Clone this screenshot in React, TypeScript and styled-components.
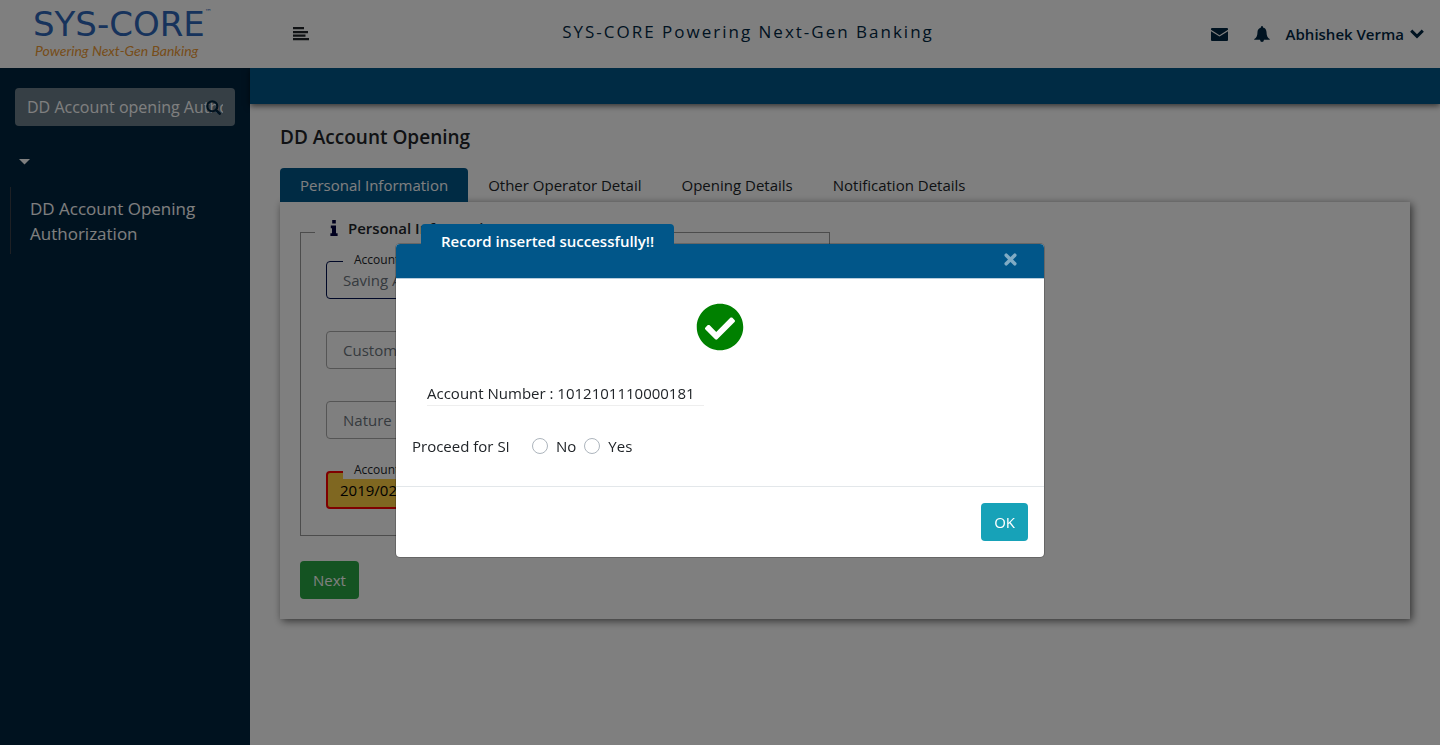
import React from "react";
import styled, { createGlobalStyle } from "styled-components";
import { FaCheckCircle } from "react-icons/fa";

const GlobalStyle = createGlobalStyle`
  *, *::before, *::after { box-sizing: border-box; }
  body {
    margin: 0;
    background: #fff;
    color: #212529;
    font-family: "Open Sans", "Noto Sans", sans-serif;
    font-size: 15px;
    line-height: 24px;
  }
  button, input { font: inherit; }
`;

const Page = styled.div`
  display: flex;
  flex-direction: column;
  min-height: 100vh;
`;

const Header = styled.header`
  position: relative;
  z-index: 1;
  display: grid;
  grid-template-columns: 250px 106px 1fr 300px;
  height: 68px;
  background: #fff;
  color: #012743;
`;

const Logo = styled.a`
  display: flex;
  flex-direction: column;
  padding: 6px 0 0 33px;
  text-decoration: none;
`;

const LogoName = styled.span`
  display: flex;
  align-items: flex-start;
  color: #2f66b8;
  font-family: "DejaVu Sans", sans-serif;
  font-size: 34px;
  line-height: 36px;
  white-space: nowrap;
`;

const TradeMark = styled.sup`
  font-size: 7px;
  line-height: 12px;
`;

const LogoTagline = styled.span`
  padding-left: 2px;
  color: #ee9a35;
  font-family: Lato, sans-serif;
  font-size: 14px;
  font-style: italic;
  line-height: 18px;
  white-space: nowrap;
`;

const IconButton = styled.button`
  display: inline-flex;
  align-items: center;
  padding: 0;
  border: 0;
  background: none;
  color: inherit;
`;

const MenuToggle = styled(IconButton)`
  padding-left: 43px;
  color: #212529;
`;

const BankTitle = styled.div`
  align-self: center;
  padding-bottom: 4px;
  font-size: 17px;
  font-weight: 500;
  letter-spacing: 2px;
  text-align: center;
  white-space: nowrap;
`;

const UserBar = styled.div`
  display: flex;
  align-items: center;
  justify-content: flex-end;
  padding-right: 16px;
`;

const MailButton = styled(IconButton)`
  margin-right: 26px;
`;

const BellButton = styled(IconButton)`
  margin-right: 16px;
`;

const UserButton = styled(IconButton)`
  gap: 6px;
  font-weight: 600;
`;

const Columns = styled.div`
  display: flex;
  flex: 1;
`;

const Sidebar = styled.aside`
  width: 250px;
  flex: none;
  padding: 20px 15px;
  background: #01243e;
  color: #fff;
`;

const SearchBox = styled.div`
  position: relative;
`;

const SearchInput = styled.input`
  width: 100%;
  height: 38px;
  padding: 0 12px;
  border: 0;
  border-radius: 4px;
  background: #6c7f8b;
  color: #fff;
  font-size: 16px;
`;

const SearchButton = styled(IconButton)`
  position: absolute;
  top: 12px;
  right: 14px;
  color: #01243e;
`;

const CaretButton = styled(IconButton)`
  display: flex;
  height: 18px;
  margin-top: 27px;
  padding-left: 4px;
`;

const SideMenu = styled.ul`
  margin: 16px 0 0 -5px;
  padding: 9px 0 8px 19px;
  border-left: 1px solid #3d4048;
  list-style: none;
`;

const SideLink = styled.a`
  display: block;
  color: #fff;
  font-size: 17px;
  line-height: 25px;
  text-decoration: none;
`;

const Main = styled.main`
  flex: 1;
  min-width: 0;
`;

const BlueBar = styled.div`
  height: 36px;
  background: #015689;
  box-shadow: 0 2px 6px rgba(0, 0, 0, 0.6);
`;

const Content = styled.div`
  padding: 18px 30px;
`;

const Heading = styled.h1`
  margin: 0 0 16px;
  font-size: 19px;
  font-weight: 600;
  line-height: 30px;
`;

const Tabs = styled.div`
  display: flex;
`;

const Tab = styled.button<{ $active?: boolean }>`
  height: 34px;
  padding: 0 20px;
  border: 0;
  border-radius: 4px 4px 0 0;
  background: ${(p) => (p.$active ? "#015689" : "transparent")};
  color: ${(p) => (p.$active ? "#fff" : "#212529")};
  white-space: nowrap;
`;

const Panel = styled.section`
  padding: 14px 20px 20px;
  background: #fff;
  box-shadow: 2px 2px 8px rgba(0, 0, 0, 0.6);
`;

const Group = styled.fieldset`
  width: 530px;
  max-width: 100%;
  margin: 0 0 25px;
  padding: 13px 25px 26px;
  border: 1px solid #999;
`;

const GroupTitle = styled.legend`
  display: flex;
  align-items: center;
  gap: 10px;
  margin-left: -11px;
  padding: 0 12px 8px 15px;
  font-weight: 600;

  svg { color: #01013e; }
`;

const Fields = styled.div`
  display: flex;
  flex-direction: column;
  gap: 32px;
`;

const Field = styled.div`
  position: relative;
`;

const FieldLabel = styled.label`
  position: absolute;
  top: -10px;
  left: 17px;
  padding: 0 11px;
  background: #fff;
  font-size: 12px;
  line-height: 18px;
`;

const TextInput = styled.input<{ $tone?: "focus" | "error" }>`
  display: block;
  width: 100%;
  height: 38px;
  padding: 0 ${(p) => (p.$tone === "error" ? 12 : 16)}px;
  border: ${(p) =>
    p.$tone === "error" ? "2px solid #f00" : p.$tone === "focus" ? "1px solid #00104e" : "1px solid #aaa"};
  border-radius: 4px;
  background: ${(p) => (p.$tone === "error" ? "#ffce43" : "#fff")};
  color: ${(p) => (p.$tone === "error" ? "#000" : "#6c757d")};

  &::placeholder { color: #6c757d; opacity: 1; }
`;

const ActionButton = styled.button<{ $color: string }>`
  height: 38px;
  padding: 0 13px;
  border: 0;
  border-radius: 4px;
  background: ${(p) => p.$color};
  color: #fff;
`;

const Backdrop = styled.div`
  position: fixed;
  z-index: 2;
  inset: 0;
  display: flex;
  align-items: flex-start;
  justify-content: center;
  padding-top: 243px;
  background: rgba(0, 0, 0, 0.5);
`;

const Dialog = styled.div`
  position: relative;
  width: 650px;
  border: 1px solid rgba(0, 0, 0, 0.2);
  border-radius: 5px;
  background: #fff;
  background-clip: padding-box;
`;

const DialogHeader = styled.div`
  display: flex;
  align-items: center;
  justify-content: flex-end;
  height: 35px;
  padding: 0 27px 4px;
  border-bottom: 1px solid #b8cddc;
  border-radius: 4px 4px 0 0;
  background: #015689;
  color: #80abc4;
`;

const DialogTitle = styled.h2`
  position: absolute;
  top: -20px;
  left: 25px;
  margin: 0;
  padding: 5px 20px 0;
  border-radius: 4px 4px 0 0;
  background: #015689;
  color: #fff;
  font-size: 15px;
  font-weight: 600;
  line-height: 24px;
`;

const DialogBody = styled.div`
  display: flex;
  flex-direction: column;
  padding: 24px 16px 28px;
`;

const SuccessIcon = styled(FaCheckCircle)`
  align-self: center;
  color: green;
`;

const AccountNumber = styled.p`
  width: 277px;
  margin: 30px 0 28px 15px;
  border-bottom: 1px solid #eee;
`;

const Choice = styled.div`
  display: flex;
  align-items: center;
`;

const ChoiceName = styled.span`
  width: 120px;
`;

const ChoiceLabel = styled.label`
  display: flex;
  align-items: center;
  gap: 8px;
  margin-right: 8px;
`;

const Radio = styled.input`
  appearance: none;
  width: 16px;
  height: 16px;
  margin: 0;
  border: 1px solid #adb5bd;
  border-radius: 50%;
  background: #fff;

  &:checked { background: #015689; }
`;

const DialogFooter = styled.div`
  display: flex;
  justify-content: flex-end;
  padding: 16px;
  border-top: 1px solid #e3e7ea;
`;

const tabs = ["Personal Information", "Other Operator Detail", "Opening Details", "Notification Details"];

function MenuIcon() {
  return (
    <svg width="16" height="14" viewBox="0 0 16 14" fill="currentColor" aria-hidden="true">
      <path d="M0 0h11v2.200H0zM0 4h15v2.200H0zM0 7.500h12.500v2.200H0zM0 11h16v2.200H0z" />
    </svg>
  );
}

function MailIcon() {
  return (
    <svg width="17" height="13" viewBox="0 0 17 13" fill="currentColor" aria-hidden="true">
      <path d="M1 0h15q1 0 1 1v.8L8.500 7.200 0 1.800V1q0-1 1-1zM0 3.200l8.500 5.300L17 3.200V12q0 1-1 1H1q-1 0-1-1z" />
    </svg>
  );
}

function BellIcon() {
  return (
    <svg width="16" height="16" viewBox="0 0 16 16" fill="currentColor" aria-hidden="true">
      <path d="M8 0q1 0 1 1v.4Q12.300 2.200 12.500 6c.1 4 1 5.600 3.200 7 .3.400.1.800-.5.800H10Q9.800 16 8 16t-2-2.200H.8c-.6 0-.8-.4-.5-.8C2.500 11.600 3.400 10 3.500 6 3.700 2.200 7 1.400 7 1.400V1q0-1 1-1z" />
    </svg>
  );
}

function ChevronIcon() {
  return (
    <svg width="14" height="10" viewBox="0 0 14 10" fill="none" stroke="currentColor" strokeWidth="3" aria-hidden="true">
      <path d="M1.200 1.600L7 7.400l5.800-5.800" />
    </svg>
  );
}

function SearchIcon() {
  return (
    <svg width="15" height="15" viewBox="0 0 15 15" fill="none" stroke="currentColor" aria-hidden="true">
      <circle cx="6.300" cy="6.300" r="5" strokeWidth="2.200" />
      <path d="M10 10l3.700 3.700" strokeWidth="2.600" strokeLinecap="round" />
    </svg>
  );
}

function CaretIcon() {
  return (
    <svg width="11" height="6" viewBox="0 0 11 6" fill="currentColor" aria-hidden="true">
      <path d="M0 0h11L5.500 5.500z" />
    </svg>
  );
}

function InfoIcon() {
  return (
    <svg width="8" height="16" viewBox="0 0 8 16" fill="currentColor" aria-hidden="true">
      <path d="M2.200 0h3.600v3.400H2.200zM.8 5.400h5.200v7.800h1.600V16H.4v-2.800H2V8.200H.8z" />
    </svg>
  );
}

function CloseIcon() {
  return (
    <svg width="13" height="13" viewBox="0 0 13 13" fill="none" stroke="currentColor" aria-hidden="true">
      <path d="M2.200 2.200l8.600 8.600M10.800 2.200l-8.600 8.600" strokeWidth="3.500" strokeLinecap="round" />
    </svg>
  );
}

export default function App() {
  return (
    <>
      <GlobalStyle />
      <Page>
        <Header>
          <Logo href="#home">
            <LogoName>
              SYS-CORE<TradeMark>™</TradeMark>
            </LogoName>
            <LogoTagline>Powering Next-Gen Banking</LogoTagline>
          </Logo>
          <MenuToggle type="button" aria-label="Toggle menu">
            <MenuIcon />
          </MenuToggle>
          <BankTitle>SYS-CORE Powering Next-Gen Banking</BankTitle>
          <UserBar>
            <MailButton type="button" aria-label="Messages">
              <MailIcon />
            </MailButton>
            <BellButton type="button" aria-label="Notifications">
              <BellIcon />
            </BellButton>
            <UserButton type="button">
              Abhishek Verma
              <ChevronIcon />
            </UserButton>
          </UserBar>
        </Header>
        <Columns>
          <Sidebar>
            <SearchBox>
              <SearchInput aria-label="Search menu" defaultValue="DD Account opening Authorization" />
              <SearchButton type="button" aria-label="Search">
                <SearchIcon />
              </SearchButton>
            </SearchBox>
            <CaretButton type="button" aria-label="Collapse section">
              <CaretIcon />
            </CaretButton>
            <SideMenu>
              <li>
                <SideLink href="#authorization">DD Account Opening Authorization</SideLink>
              </li>
            </SideMenu>
          </Sidebar>
          <Main>
            <BlueBar />
            <Content>
              <Heading>DD Account Opening</Heading>
              <Tabs role="tablist">
                {tabs.map((name, i) => (
                  <Tab key={name} type="button" role="tab" aria-selected={i === 0} $active={i === 0}>
                    {name}
                  </Tab>
                ))}
              </Tabs>
              <Panel>
                <Group>
                  <GroupTitle>
                    <InfoIcon />
                    Personal Information
                  </GroupTitle>
                  <Fields>
                    <Field>
                      <TextInput id="account-type" $tone="focus" defaultValue="Saving Account" />
                      <FieldLabel htmlFor="account-type">Account Type</FieldLabel>
                    </Field>
                    <Field>
                      <TextInput aria-label="Customer ID" placeholder="Customer ID" />
                    </Field>
                    <Field>
                      <TextInput aria-label="Nature of Account" placeholder="Nature of Account" />
                    </Field>
                    <Field>
                      <TextInput id="opening-date" $tone="error" defaultValue="2019/02/12" />
                      <FieldLabel htmlFor="opening-date">Account Opening Date</FieldLabel>
                    </Field>
                  </Fields>
                </Group>
                <ActionButton type="button" $color="#28a745">
                  Next
                </ActionButton>
              </Panel>
            </Content>
          </Main>
        </Columns>
      </Page>
      <Backdrop>
        <Dialog role="dialog" aria-modal="true" aria-labelledby="dialog-title">
          <DialogHeader>
            <IconButton type="button" aria-label="Close">
              <CloseIcon />
            </IconButton>
          </DialogHeader>
          <DialogTitle id="dialog-title">Record inserted successfully!!</DialogTitle>
          <DialogBody>
            <SuccessIcon size={48} />
            <AccountNumber>Account Number : 1012101110000181</AccountNumber>
            <Choice role="radiogroup" aria-labelledby="si-label">
              <ChoiceName id="si-label">Proceed for SI</ChoiceName>
              <ChoiceLabel>
                <Radio type="radio" name="si" value="no" />
                No
              </ChoiceLabel>
              <ChoiceLabel>
                <Radio type="radio" name="si" value="yes" />
                Yes
              </ChoiceLabel>
            </Choice>
          </DialogBody>
          <DialogFooter>
            <ActionButton type="button" $color="#17a2b8">
              OK
            </ActionButton>
          </DialogFooter>
        </Dialog>
      </Backdrop>
    </>
  );
}
